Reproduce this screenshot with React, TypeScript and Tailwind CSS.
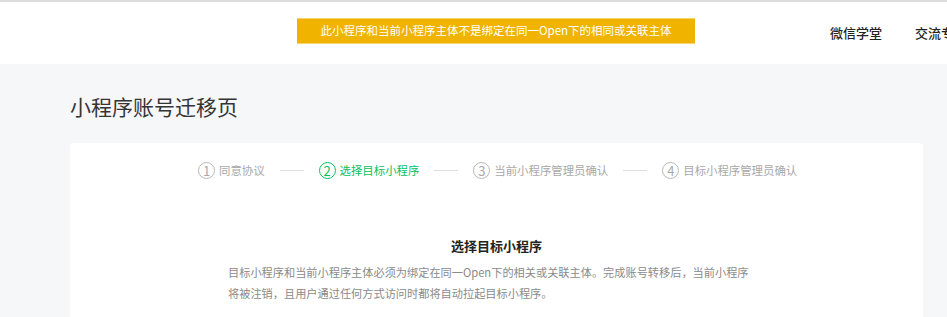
const font = { fontFamily: '"Noto Sans CJK SC", "Liberation Sans", sans-serif' };

const steps = [
  { n: 1, label: '同意协议', active: false },
  { n: 2, label: '选择目标小程序', active: true },
  { n: 3, label: '当前小程序管理员确认', active: false },
  { n: 4, label: '目标小程序管理员确认', active: false },
];

const Step = ({ n, label, active }: { n: number; label: string; active: boolean }) => (
  <div className={`flex items-center gap-[4px] text-[11.4px] ${active ? 'text-[#07c160]' : 'text-[#a8a8a8]'}`}>
    <span
      className={`flex h-[17px] w-[17px] items-center justify-center rounded-full border text-[13px] leading-none ${
        active ? 'border-[#07c160]' : 'border-[#b8b8b8]'
      }`}
    >
      {n}
    </span>
    <span>{label}</span>
  </div>
);

const Line = () => <div className="mx-[15px] h-px w-[24px] bg-[#dedede]" />;

export default function App() {
  return (
    <div className="h-[317px] w-[947px] overflow-hidden bg-[#f6f7f9]" style={font}>
      <div className="h-[64px] border-t-2 border-[#dcdcdc] bg-white">
        <div className="relative flex h-[62px] items-center">
          <div className="absolute left-[297px] top-[16px] flex h-[26px] w-[398px] items-center justify-center border-y border-[#f7d36e] bg-[#efb300] text-[11.5px] text-white">
            此小程序和当前小程序主体不是绑定在同一Open下的相同或关联主体
          </div>
          <div className="flex gap-[33px] whitespace-nowrap pl-[830px] text-[13px] font-medium text-[#222]">
            <span>微信学堂</span>
            <span>交流专区</span>
          </div>
        </div>
      </div>
      <div className="px-[70px] pt-[26px]">
        <h1 className="text-[21px] leading-[32px] text-[#353535]">小程序账号迁移页</h1>
        <div className="mt-[21px] h-[200px] w-[853px] rounded-[4px] bg-white">
          <div className="flex items-center pl-[128px] pt-[19px]">
            <Step {...steps[0]} />
            <Line />
            <Step {...steps[1]} />
            <Line />
            <Step {...steps[2]} />
            <Line />
            <Step {...steps[3]} />
          </div>
          <h2 className="mt-[57px] text-center text-[13px] font-bold leading-[20px] text-[#222]">选择目标小程序</h2>
          <p className="ml-[158px] mt-[6px] whitespace-nowrap text-[11.2px] leading-[21px] text-[#8a8a8a]">
            目标小程序和当前小程序主体必须为绑定在同一Open下的相关或关联主体。完成账号转移后，当前小程序
            <br />
            将被注销，且用户通过任何方式访问时都将自动拉起目标小程序。
          </p>
        </div>
      </div>
    </div>
  );
}
